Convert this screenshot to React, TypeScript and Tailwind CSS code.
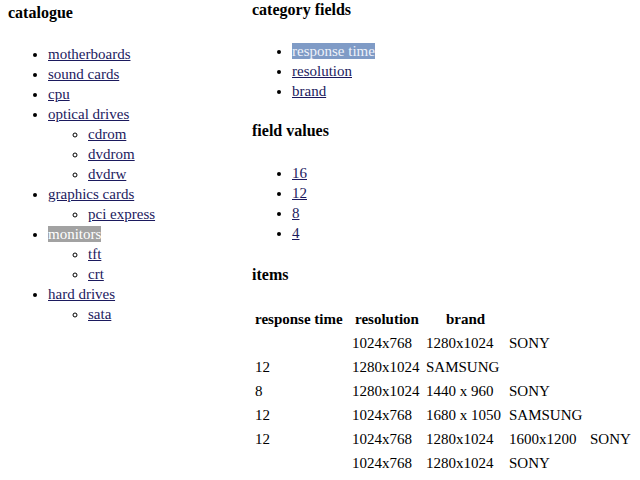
const catalogue: { name: string; sub?: string[]; selected?: boolean }[] = [
  { name: "motherboards" },
  { name: "sound cards" },
  { name: "cpu" },
  { name: "optical drives", sub: ["cdrom", "dvdrom", "dvdrw"] },
  { name: "graphics cards", sub: ["pci express"] },
  { name: "monitors", sub: ["tft", "crt"], selected: true },
  { name: "hard drives", sub: ["sata"] },
];

const fields = ["response time", "resolution", "brand"];
const values = ["16", "12", "8", "4"];

const rows: string[][] = [
  ["", "1024x768", "1280x1024", "SONY"],
  ["12", "1280x1024", "SAMSUNG"],
  ["8", "1280x1024", "1440 x 960", "SONY"],
  ["12", "1024x768", "1680 x 1050", "SAMSUNG"],
  ["12", "1024x768", "1280x1024", "1600x1200", "SONY"],
  ["", "1024x768", "1280x1024", "SONY"],
];

const link = "text-[#1c1a5e] underline";
const heading = "font-bold text-[16px] leading-[20px]";

export default function App() {
  return (
    <div className="flex w-[640px] h-[480px] bg-white text-black text-[15px] leading-[20px] font-['Liberation_Serif',serif] overflow-hidden">
      {/* left column */}
      <div className="w-[252px] shrink-0 pl-[8px] pt-[3px]">
        <h2 className={heading}>catalogue</h2>
        <ul className="mt-[21px] pl-[40px] list-disc">
          {catalogue.map((c) => (
            <li key={c.name}>
              {c.selected ? (
                <span className="bg-[#a2a2a2] text-white">{c.name}</span>
              ) : (
                <a className={link}>{c.name}</a>
              )}
              {c.sub && (
                <ul className="pl-[40px] list-[circle]">
                  {c.sub.map((s) => (
                    <li key={s}>
                      <a className={link}>{s}</a>
                    </li>
                  ))}
                </ul>
              )}
            </li>
          ))}
        </ul>
      </div>

      {/* right column */}
      <div className="flex-1">
        <h2 className={heading}>category fields</h2>
        <ul className="mt-[21px] pl-[40px] list-disc">
          {fields.map((f, i) => (
            <li key={f}>
              {i === 0 ? (
                <span className="bg-[#7f9bc6] text-[#eef2fa]">{f}</span>
              ) : (
                <a className={link}>{f}</a>
              )}
            </li>
          ))}
        </ul>

        <h2 className={`${heading} mt-[20px]`}>field values</h2>
        <ul className="mt-[22px] pl-[40px] list-disc">
          {values.map((v) => (
            <li key={v}>
              <a className={link}>{v}</a>
            </li>
          ))}
        </ul>

        <h2 className={`${heading} mt-[22px]`}>items</h2>
        <table className="mt-[21px] border-separate border-spacing-[2px]">
          <colgroup>
            <col className="w-[95px]" />
            <col className="w-[72px]" />
            <col className="w-[81px]" />
            <col className="w-[79px]" />
            <col />
          </colgroup>
          <thead>
            <tr>
              <th className="p-[1px] h-[22px] font-bold whitespace-nowrap text-left">response time</th>
              <th className="p-[1px] h-[22px] font-bold">resolution</th>
              <th className="p-[1px] h-[22px] font-bold">brand</th>
            </tr>
          </thead>
          <tbody>
            {rows.map((r, i) => (
              <tr key={i}>
                {r.map((cell, j) => (
                  <td key={j} className="p-[1px] h-[22px] whitespace-nowrap text-left">
                    {cell}
                  </td>
                ))}
              </tr>
            ))}
          </tbody>
        </table>
      </div>
    </div>
  );
}
